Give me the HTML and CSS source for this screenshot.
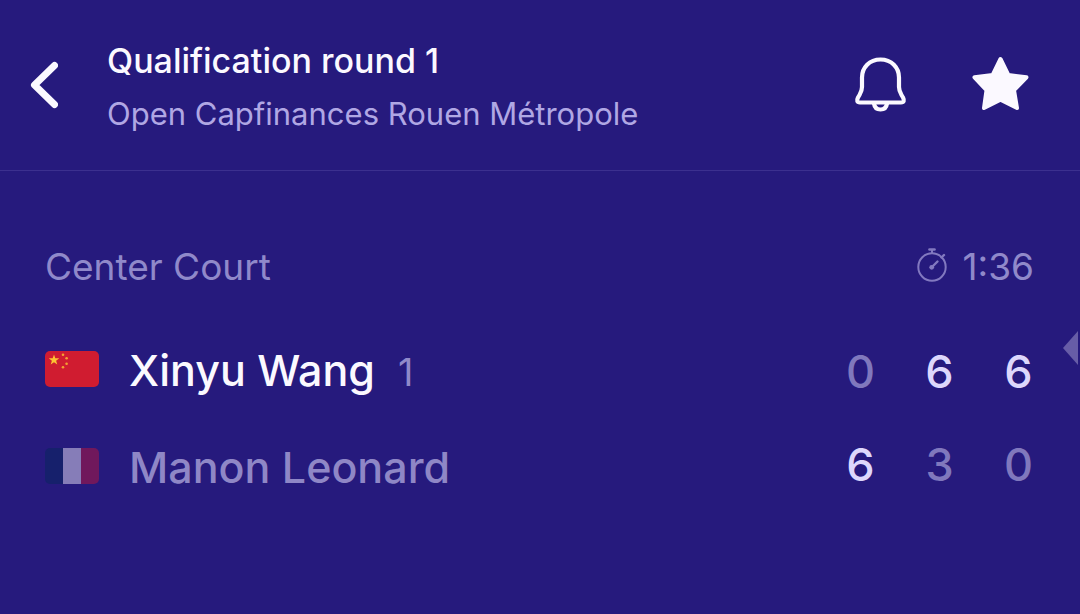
FILE: index.html
```html
<!DOCTYPE html>
<html lang="en">
<head>
<meta charset="utf-8">
<meta name="viewport" content="width=device-width, initial-scale=1">
<title>Xinyu Wang – Manon Leonard</title>
<link rel="stylesheet" href="styles.css">
</head>
<body>
<header class="topbar">
  <button class="icon-button" type="button" aria-label="Back">
    <svg width="28" height="48" viewBox="0 0 28 48"><path d="M24.500 4.500L4.500 24L24.500 43.500" fill="none" stroke="currentColor" stroke-width="7" stroke-linecap="round" stroke-linejoin="round"/></svg>
  </button>
  <div class="heading">
    <h1 class="title">Qualification round 1</h1>
    <p class="subtitle">Open Capfinances Rouen Métropole</p>
  </div>
  <div class="actions">
    <button class="icon-button" type="button" aria-label="Notifications">
      <svg width="60" height="60" viewBox="0 0 60 60" fill="none" stroke="currentColor" stroke-width="4.200" stroke-linecap="round" stroke-linejoin="round"><path d="M30.500 4.500C19.500 4.500 12 12.500 12 22.500V32C12 35.500 11 37.500 9.500 40L8 42.500C6.500 45.500 7 47.500 10 47.500H51C54 47.500 54.500 45.500 53 42.500L51.500 40C50 37.500 49 35.500 49 32V22.500C49 12.500 41.500 4.500 30.500 4.500Z"/><path d="M24 48.500C24.500 52.500 27 54.500 30.500 54.500S36.500 52.500 37 48.500"/></svg>
    </button>
    <button class="icon-button" type="button" aria-label="Favourite" aria-pressed="true">
      <svg width="60" height="60" viewBox="0 0 60 60" fill="currentColor" stroke="currentColor" stroke-width="4" stroke-linejoin="round"><path d="M30.500 4L38.300 20L56.500 22.300L44 35.200L47 53L30.500 44.800L14 53L16.500 35.200L4.500 22.300L22.700 20Z"/></svg>
    </button>
  </div>
</header>
<main class="match">
  <div class="info">
    <span>Center Court</span>
    <span class="clock">
      <svg width="32" height="36" viewBox="0 0 32 36" fill="none" stroke="currentColor" stroke-width="2" stroke-linecap="round"><circle cx="16" cy="20" r="13.700"/><path d="M13.500 2.500H18.500" stroke-width="2.600"/><path d="M16 3V6"/><path d="M25.500 10.500L28 8" stroke-width="2.400"/><path d="M16 20L21.500 14.500" stroke-width="2.400"/><circle cx="15.700" cy="20.300" r="2.400" fill="currentColor" stroke="none"/></svg>
      <time datetime="PT1H36M">1:36</time>
    </span>
  </div>
  <div class="board">
    <ul class="players">
      <li class="player">
        <svg class="flag" width="54" height="36" viewBox="0 0 54 36" role="img" aria-label="China"><rect width="54" height="36" fill="#d01c30"/><g fill="#fcc332"><path d="M9 3.500L10.300 7.300H14.300L11.100 9.700L12.300 13.500L9 11.200L5.700 13.500L6.900 9.700L3.700 7.300H7.700Z"/><circle cx="18" cy="3.700" r="1.300" opacity=".8"/><circle cx="21.600" cy="7.300" r="1.300" opacity=".8"/><circle cx="21.600" cy="12.700" r="1.300" opacity=".8"/><circle cx="18" cy="16.300" r="1.300" opacity=".8"/></g></svg>
        <div class="label">
          <span class="name">Xinyu Wang</span>
          <span class="seed">1</span>
        </div>
      </li>
      <li class="player beaten">
        <svg class="flag" width="54" height="36" viewBox="0 0 54 36" role="img" aria-label="France"><rect width="18" height="36" fill="#16206c"/><rect x="18" width="18" height="36" fill="#867db8"/><rect x="36" width="18" height="36" fill="#70185c"/></svg>
        <div class="label">
          <span class="name">Manon Leonard</span>
        </div>
      </li>
    </ul>
    <table class="sets" aria-label="Set scores">
      <tbody>
        <tr><td>0</td><td class="won">6</td><td class="won">6</td></tr>
        <tr><td class="won">6</td><td>3</td><td>0</td></tr>
      </tbody>
    </table>
    <svg class="marker" width="15" height="34" viewBox="0 0 15 34" aria-hidden="true"><path d="M15 0V34L0 17Z" fill="currentColor"/></svg>
  </div>
</main>
</body>
</html>
```
FILE: styles.css
```css
* {
  box-sizing: border-box;
}

body {
  margin: 0;
  background: #261a7d;
  color: #fbf9ff;
  font-family: Inter, "Liberation Sans", sans-serif;
}

svg {
  display: block;
}

.topbar {
  display: flex;
  align-items: center;
  min-height: 171px;
  padding: 0 50px 0 30px;
  border-bottom: 1px solid #3c308f;
}

.icon-button {
  padding: 0;
  border: 0;
  background: none;
  color: inherit;
  cursor: pointer;
}

.heading {
  flex: 1;
  padding: 4px 0 0 49px;
}

.title,
.subtitle {
  margin: 0;
  line-height: 53px;
}

.title {
  font-size: 34px;
  font-weight: 500;
}

.subtitle {
  font-size: 31px;
  color: #b0a7e4;
}

.actions {
  display: flex;
  gap: 60px;
}

.info {
  display: flex;
  justify-content: space-between;
  padding: 72px 46px 0 45px;
  font-size: 37px;
  line-height: 48px;
  color: #9089ca;
}

.clock {
  display: flex;
  align-items: center;
  gap: 14px;
}

.clock svg {
  margin-bottom: 4px;
  color: #8279c0;
}

.board {
  position: relative;
  display: flex;
  align-items: center;
  justify-content: space-between;
  padding: 29px 22px 0 45px;
}

.players {
  margin: 0;
  padding: 0;
  list-style: none;
}

.player {
  display: flex;
  align-items: center;
  height: 97px;
}

.flag {
  margin-right: 30px;
  border-radius: 5px;
}

.label {
  display: flex;
  align-items: baseline;
  gap: 23px;
  padding-top: 2px;
}

.name {
  font-size: 43px;
  font-weight: 500;
  line-height: 52px;
}

.seed {
  font-size: 38px;
  color: #9089ca;
}

.beaten .name {
  color: #8f87c6;
}

.sets {
  border-collapse: collapse;
  font-size: 45px;
  font-weight: 500;
  color: #8078bd;
}

.sets td {
  width: 79px;
  height: 93px;
  padding: 2px 0 0;
  text-align: center;
}

.sets .won {
  color: #ddd7fc;
}

.marker {
  position: absolute;
  top: 40px;
  right: 2px;
  color: #675da7;
}
```
